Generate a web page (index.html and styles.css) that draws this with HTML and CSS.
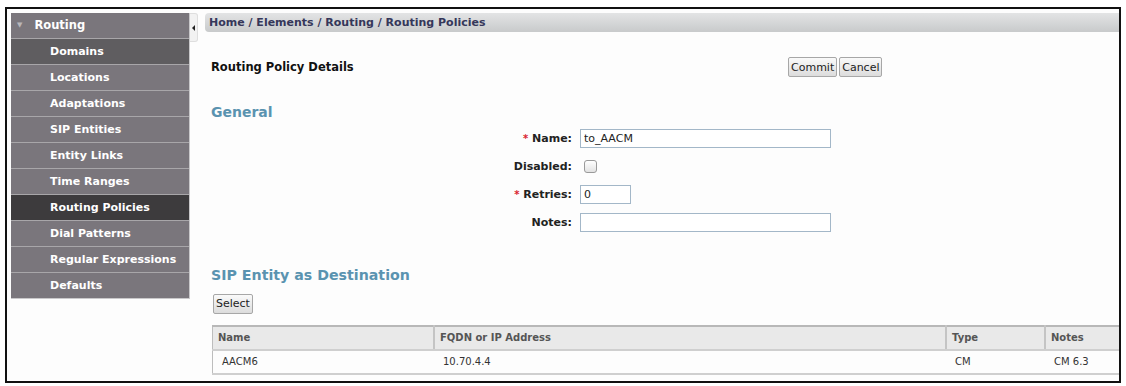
FILE: index.html
```html
<!DOCTYPE html>
<html>
<head>
  <title>Routing Policy Details</title>
  <link rel="stylesheet" href="styles.css">
</head>
<body>
  <div class="frame">
    <div class="sidebar">
      <div class="nav-head"><span class="arrow">&#9660;</span> Routing</div>
      <div class="nav-item hover">Domains</div>
      <div class="nav-item">Locations</div>
      <div class="nav-item">Adaptations</div>
      <div class="nav-item">SIP Entities</div>
      <div class="nav-item">Entity Links</div>
      <div class="nav-item">Time Ranges</div>
      <div class="nav-item active">Routing Policies</div>
      <div class="nav-item">Dial Patterns</div>
      <div class="nav-item">Regular Expressions</div>
      <div class="nav-item">Defaults</div>
    </div>

    <div class="collapse-tab"><span class="tab-arrow"></span></div>

    <div class="main">
      <div class="breadcrumb">Home / Elements / Routing / Routing Policies</div>

      <div class="content">
        <div class="title-row">
          <span class="page-title">Routing Policy Details</span>
          <div class="actions">
            <button class="btn">Commit</button><button class="btn">Cancel</button>
          </div>
        </div>

        <h2 class="section-title">General</h2>

        <div class="form">
          <div class="form-row">
            <label><span class="req">*</span> Name:</label>
            <input type="text" class="field wide" value="to_AACM">
          </div>
          <div class="form-row">
            <label>Disabled:</label>
            <span class="check"></span>
          </div>
          <div class="form-row">
            <label><span class="req">*</span> Retries:</label>
            <input type="text" class="field short" value="0">
          </div>
          <div class="form-row">
            <label>Notes:</label>
            <input type="text" class="field wide" value="">
          </div>
        </div>

        <h2 class="section-title dest">SIP Entity as Destination</h2>
        <button class="btn select-btn">Select</button>

        <table class="grid">
          <thead>
            <tr>
              <th class="c-name">Name</th>
              <th class="c-fqdn">FQDN or IP Address</th>
              <th class="c-type">Type</th>
              <th class="c-notes">Notes</th>
            </tr>
          </thead>
          <tbody>
            <tr>
              <td>AACM6</td>
              <td>10.70.4.4</td>
              <td>CM</td>
              <td>CM 6.3</td>
            </tr>
          </tbody>
        </table>
      </div>
    </div>
  </div>
</body>
</html>
```

FILE: styles.css
```css
body {
  margin: 0;
  background-color: #fff;
  font-family: "DejaVu Sans", Verdana, sans-serif;
}

.frame {
  display: flex;
  margin: 7px 5px 0 5px;
  height: 376px;
  border: 2px solid #111;
  padding: 4px 0 0 4px;
  box-sizing: border-box;
  background-color: #fdfdfd;
  overflow: hidden;
}

/* left navigation */
.sidebar {
  width: 178px;
  flex-shrink: 0;
  align-self: flex-start;
  background-color: #7a767c;
  border-right: 1px solid #c9c8ca;
  border-bottom: 1px solid #c9c8ca;
}
.nav-head,
.nav-item {
  height: 25px;
  line-height: 25px;
  color: #fff;
  font-size: 11px;
  font-weight: bold;
  border-bottom: 1px solid #a8a6a9;
  white-space: nowrap;
}
.nav-head {
  padding-left: 6px;
  font-size: 11.5px;
}
.nav-head .arrow {
  color: #b9b7ba;
  font-size: 7px;
  margin-right: 8px;
  vertical-align: 2px;
}
.nav-item {
  padding-left: 39px;
}
.nav-item:last-child {
  border-bottom: none;
}
.nav-item.hover {
  background-color: #5f5d60;
}
.nav-item.active {
  background-color: #3d3b3d;
}

.collapse-tab {
  width: 7px;
  height: 27px;
  flex-shrink: 0;
  background-color: #f2f2f2;
  border: 1px solid #dedede;
  border-left: none;
  border-radius: 0 3px 3px 0;
  display: flex;
  align-items: center;
  justify-content: center;
}
.tab-arrow {
  width: 0;
  height: 0;
  border-top: 3px solid transparent;
  border-bottom: 3px solid transparent;
  border-right: 3px solid #222;
}

/* main area */
.main {
  flex: 1;
  margin-left: 7px;
}
.breadcrumb {
  height: 19px;
  line-height: 19px;
  padding-left: 4px;
  font-size: 11px;
  font-weight: bold;
  color: #35375a;
  background: linear-gradient(#e3e4e5, #c8cacb);
  border-radius: 4px 0 0 4px;
}
.content {
  padding-left: 6px;
}

.title-row {
  display: flex;
  align-items: center;
  margin-top: 25px;
}
.page-title {
  font-size: 11.5px;
  font-weight: bold;
  color: #111;
  width: 577px;
}
.actions {
  display: flex;
  gap: 2px;
}

.btn {
  font-family: "DejaVu Sans", Verdana, sans-serif;
  font-size: 11px;
  color: #222;
  height: 20px;
  padding: 0 2px;
  background: linear-gradient(#fafafa, #dcdcdc);
  border: 1px solid #a7a7a7;
  border-radius: 2px;
}
.select-btn {
  margin-left: 2px;
}

.section-title {
  margin: 27px 0 0 0;
  font-size: 14px;
  font-weight: bold;
  color: #5a93b0;
}
.section-title.dest {
  margin: 35px 0 9px 0;
  font-size: 14.2px;
}

.form {
  display: flex;
  flex-direction: column;
  gap: 9px;
  margin-top: 9px;
}
.form-row {
  display: flex;
  align-items: center;
  height: 19px;
}
.form-row label {
  width: 361px;
  text-align: right;
  font-size: 11px;
  font-weight: bold;
  color: #222;
  margin-right: 8px;
}
.req {
  color: #d9232f;
  font-size: 10px;
}
.field {
  font-family: "DejaVu Sans", Verdana, sans-serif;
  font-size: 11px;
  color: #222;
  height: 19px;
  box-sizing: border-box;
  border: 1px solid #a3b7c8;
  padding: 0 3px;
  background-color: #fff;
}
.field.wide {
  width: 251px;
}
.field.short {
  width: 51px;
}
.check {
  width: 11px;
  height: 11px;
  margin-left: 4px;
  border: 1px solid #9a9a9a;
  border-radius: 3px;
  background: linear-gradient(#fff, #e2e2e2);
}

.grid {
  margin: 11px 0 0 1px;
  width: 909px;
  border-collapse: collapse;
  font-size: 10px;
}
.grid th {
  text-align: left;
  height: 22px;
  padding: 0 5px;
  background-color: #e9e9e9;
  color: #555;
  border-top: 2px solid #b8b8b8;
  border-bottom: 2px solid #cfcfcf;
  border-left: 1px solid #bdbdbd;
  border-right: 2px solid #c4c4c4;
}
.grid td {
  height: 22px;
  padding: 0 9px;
  color: #333;
  border-bottom: 2px solid #cfcfcf;
  border-left: 1px solid #bdbdbd;
}
.grid td + td {
  border-left: none;
}
.c-name { width: 210px; }
.c-fqdn { width: 500px; }
.c-type { width: 87px; }
```
